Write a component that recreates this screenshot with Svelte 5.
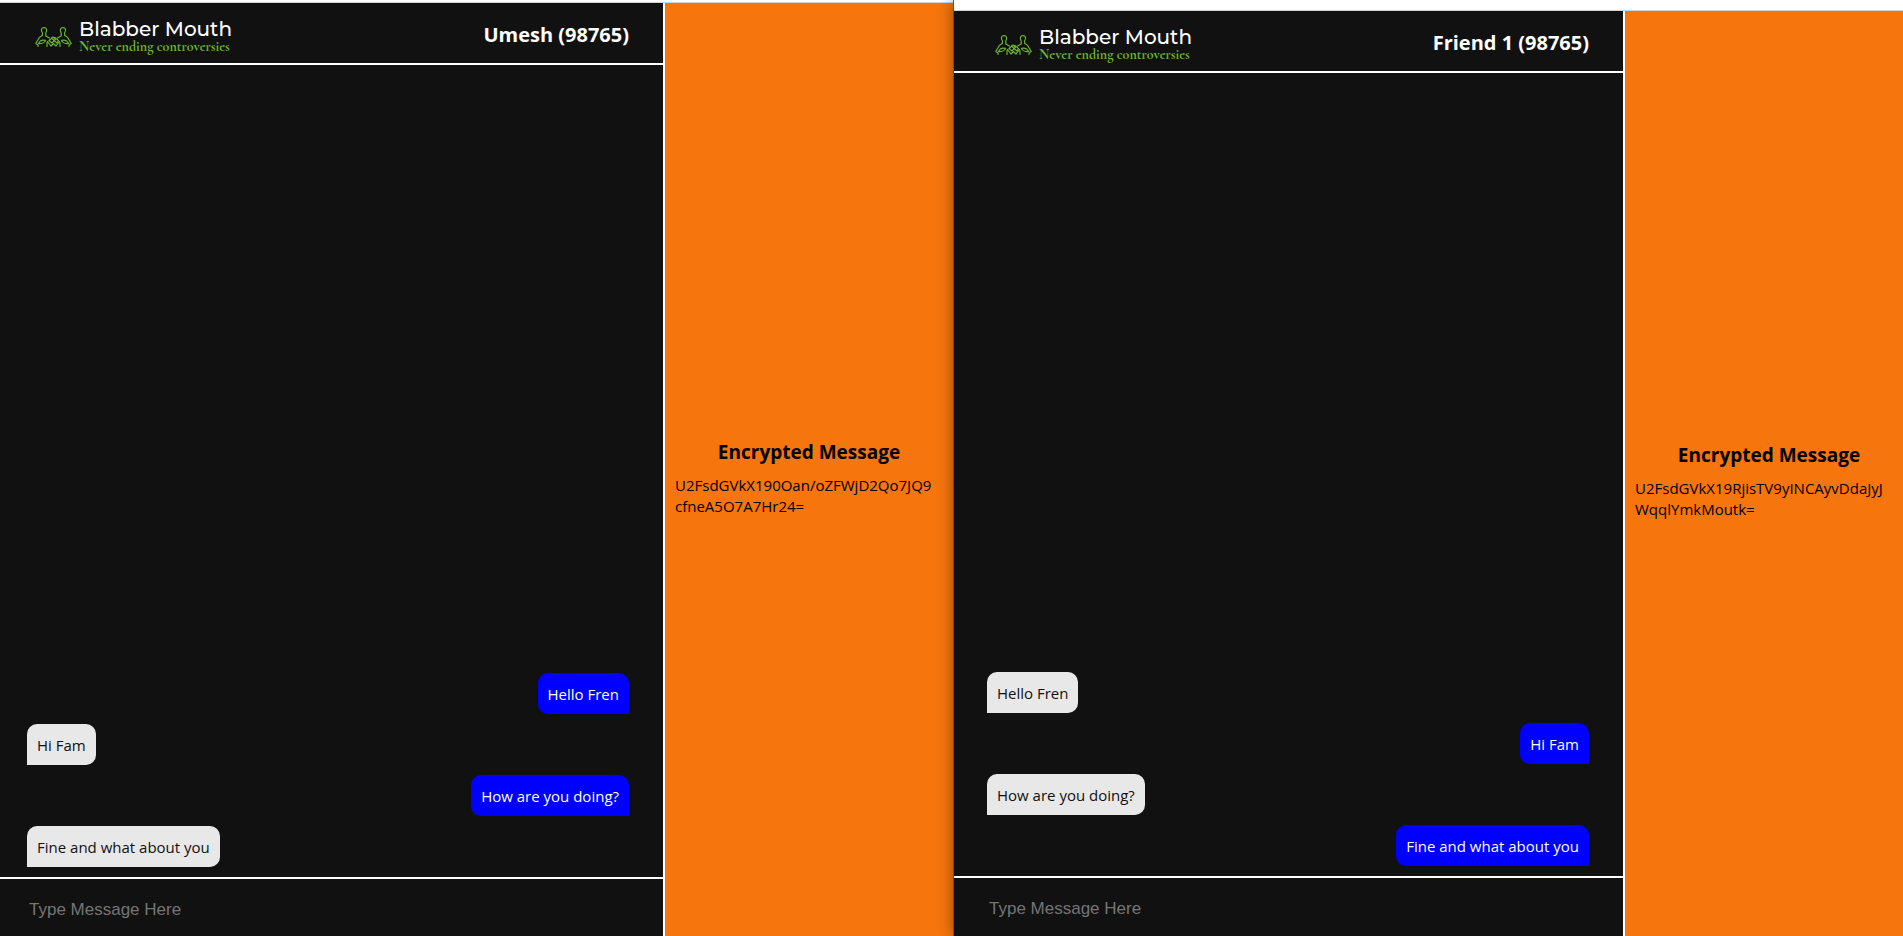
<script>
  const windows = [
    {
      id: 'umesh',
      name: 'Umesh (98765)',
      cipher: 'U2FsdGVkX190Oan/oZFWjD2Qo7JQ9cfneA5O7A7Hr24=',
      messages: [
        { text: 'Hello Fren', mine: true },
        { text: 'Hi Fam', mine: false },
        { text: 'How are you doing?', mine: true },
        { text: 'Fine and what about you', mine: false }
      ]
    },
    {
      id: 'friend',
      name: 'Friend 1 (98765)',
      cipher: 'U2FsdGVkX19RjisTV9yINCAyvDdaJyJWqqlYmkMoutk=',
      messages: [
        { text: 'Hello Fren', mine: false },
        { text: 'Hi Fam', mine: true },
        { text: 'How are you doing?', mine: false },
        { text: 'Fine and what about you', mine: true }
      ]
    }
  ];
</script>

<div class="desktop">
  {#each windows as win (win.id)}
    <section class="window {win.id}">
      <div class="edge"></div>
      <div class="body">
        <main class="chat">
          <header>
            <div class="logo">
              <svg viewBox="0 0 37 20" width="37" height="20" aria-hidden="true">
                <g fill="none" stroke="#6cb33a" stroke-width="1.2" stroke-linecap="round" stroke-linejoin="round">
                  <path d="M7.200 8.500L7.500 6C5.500 3.500 6.300 .7 9 .7C11.700 .7 12.500 3.500 10.800 6V9L14.500 11" />
                  <path d="M7.200 8.500C5 9.500 3.500 11 2.800 13L.8 16.500L3 18V19.500" />
                  <path d="M3.500 16.500C4.500 14 7.500 12.700 10.500 13.300C10 15.300 7 16.800 3.500 16.500Z" />
                  <path d="M29.800 8.500L29.500 6C31.500 3.500 30.700 .7 28 .7C25.300 .7 24.500 3.500 26.200 6V9L22.500 11" />
                  <path d="M29.800 8.500C32 9.500 33.500 11 34.200 13L36.200 16.500L34 18V19.500" />
                  <path d="M33.500 16.500C32.500 14 29.500 12.700 26.500 13.300C27 15.300 30 16.800 33.500 16.500Z" />
                  <path d="M12 19.500V15.500M25 19.500V15.500M12.500 14.500L16 19L18.500 16.500L21 19L24.500 14.500" />
                  <path d="M14 13.500L18 10L20.500 12L17 16L14 13.500M16.500 11L22 16L23.500 13.500L20 10.500" />
                </g>
              </svg>
              <div class="brand">
                <span class="title">Blabber Mouth</span>
                <span class="tagline">Never ending controversies</span>
              </div>
            </div>
            <h1>{win.name}</h1>
          </header>
          <div class="messages">
            {#each win.messages as message}
              <p class="bubble" class:mine={message.mine}>{message.text}</p>
            {/each}
          </div>
          <form>
            <input type="text" aria-label="Message" placeholder="Type Message Here" />
          </form>
        </main>
        <aside>
          <h2>Encrypted Message</h2>
          <p>{win.cipher}</p>
        </aside>
      </div>
    </section>
  {/each}
</div>

<style>
  :global(body) {
    margin: 0;
    background: #fff;
  }
  .desktop {
    display: grid;
    grid-template-columns: 953fr 950fr;
    height: 100vh;
    overflow: hidden;
    font-family: "Segoe UI", "Open Sans", "Noto Sans", sans-serif;
    font-size: 15px;
    line-height: 21px;
  }
  .window {
    --start: 27px;
    --side: 288px;
    --clip: 10px;
    --drop: 16px;
    --foot: 57px;
    display: flex;
    flex-direction: column;
    min-width: 0;
    background: #fff;
  }
  .friend {
    --start: 33px;
    --side: 278px;
    --clip: 0px;
    --drop: 14px;
    --foot: 58px;
    z-index: 1;
    border-left: 1px solid #555;
    box-shadow: 0 0 14px rgba(0, 0, 0, 0.4);
  }
  .edge {
    height: 2px;
    border-bottom: 1px solid #d0d3da;
  }
  .friend .edge {
    height: 10px;
  }
  .body {
    flex: 1;
    display: flex;
    min-height: 0;
  }
  .chat {
    flex: 1;
    min-width: 0;
    display: flex;
    flex-direction: column;
    background: #111;
    border-right: 2px solid #fff;
  }
  header {
    box-sizing: border-box;
    display: flex;
    align-items: center;
    justify-content: space-between;
    height: 62px;
    padding: 4px 34px 0 calc(var(--start) + 8px);
    border-bottom: 2px solid #fff;
  }
  .logo {
    display: flex;
    align-items: center;
    gap: 7px;
  }
  .logo svg {
    margin-top: 4px;
  }
  .brand {
    display: flex;
    flex-direction: column;
    padding-top: 3px;
    white-space: nowrap;
  }
  .title {
    font-family: Montserrat, "Open Sans", sans-serif;
    font-size: 20px;
    font-weight: 500;
    line-height: 20px;
    color: #fff;
  }
  .tagline {
    font-family: "Cormorant Garamond", "Liberation Serif", serif;
    font-size: 14px;
    font-weight: 700;
    line-height: 15px;
    color: #6cb33a;
  }
  h1,
  h2,
  p {
    margin: 0;
  }
  h1 {
    font-size: 20px;
    line-height: 28px;
    color: #fff;
  }
  .messages {
    flex: 1;
    display: flex;
    flex-direction: column;
    justify-content: flex-end;
    align-items: flex-start;
    gap: 10px;
    padding: 10px 34px 10px var(--start);
  }
  .bubble {
    padding: 11px 10px 9px;
    border-radius: 10px 10px 10px 0;
    background: #e8e8e8;
    color: #111;
  }
  .bubble.mine {
    align-self: flex-end;
    border-radius: 10px 10px 0 10px;
    background: #00f;
    color: #fff;
  }
  form {
    display: flex;
    height: var(--foot);
    border-top: 2px solid #fff;
  }
  input {
    flex: 1;
    min-width: 0;
    padding: 4px 34px 0 calc(var(--start) + 2px);
    border: 0;
    outline: 0;
    background: transparent;
    color: #fff;
    font-family: "Liberation Sans", Arial, sans-serif;
    font-size: 17px;
  }
  input::placeholder {
    color: #757575;
  }
  aside {
    box-sizing: border-box;
    flex: none;
    width: var(--side);
    display: flex;
    flex-direction: column;
    justify-content: center;
    gap: 10px;
    padding: var(--drop) var(--clip) 0 10px;
    background: #f6750c;
    color: #000;
  }
  h2 {
    font-size: 19px;
    line-height: 26px;
    text-align: center;
  }
  aside p {
    padding-right: 8px;
    word-break: break-all;
  }
</style>
